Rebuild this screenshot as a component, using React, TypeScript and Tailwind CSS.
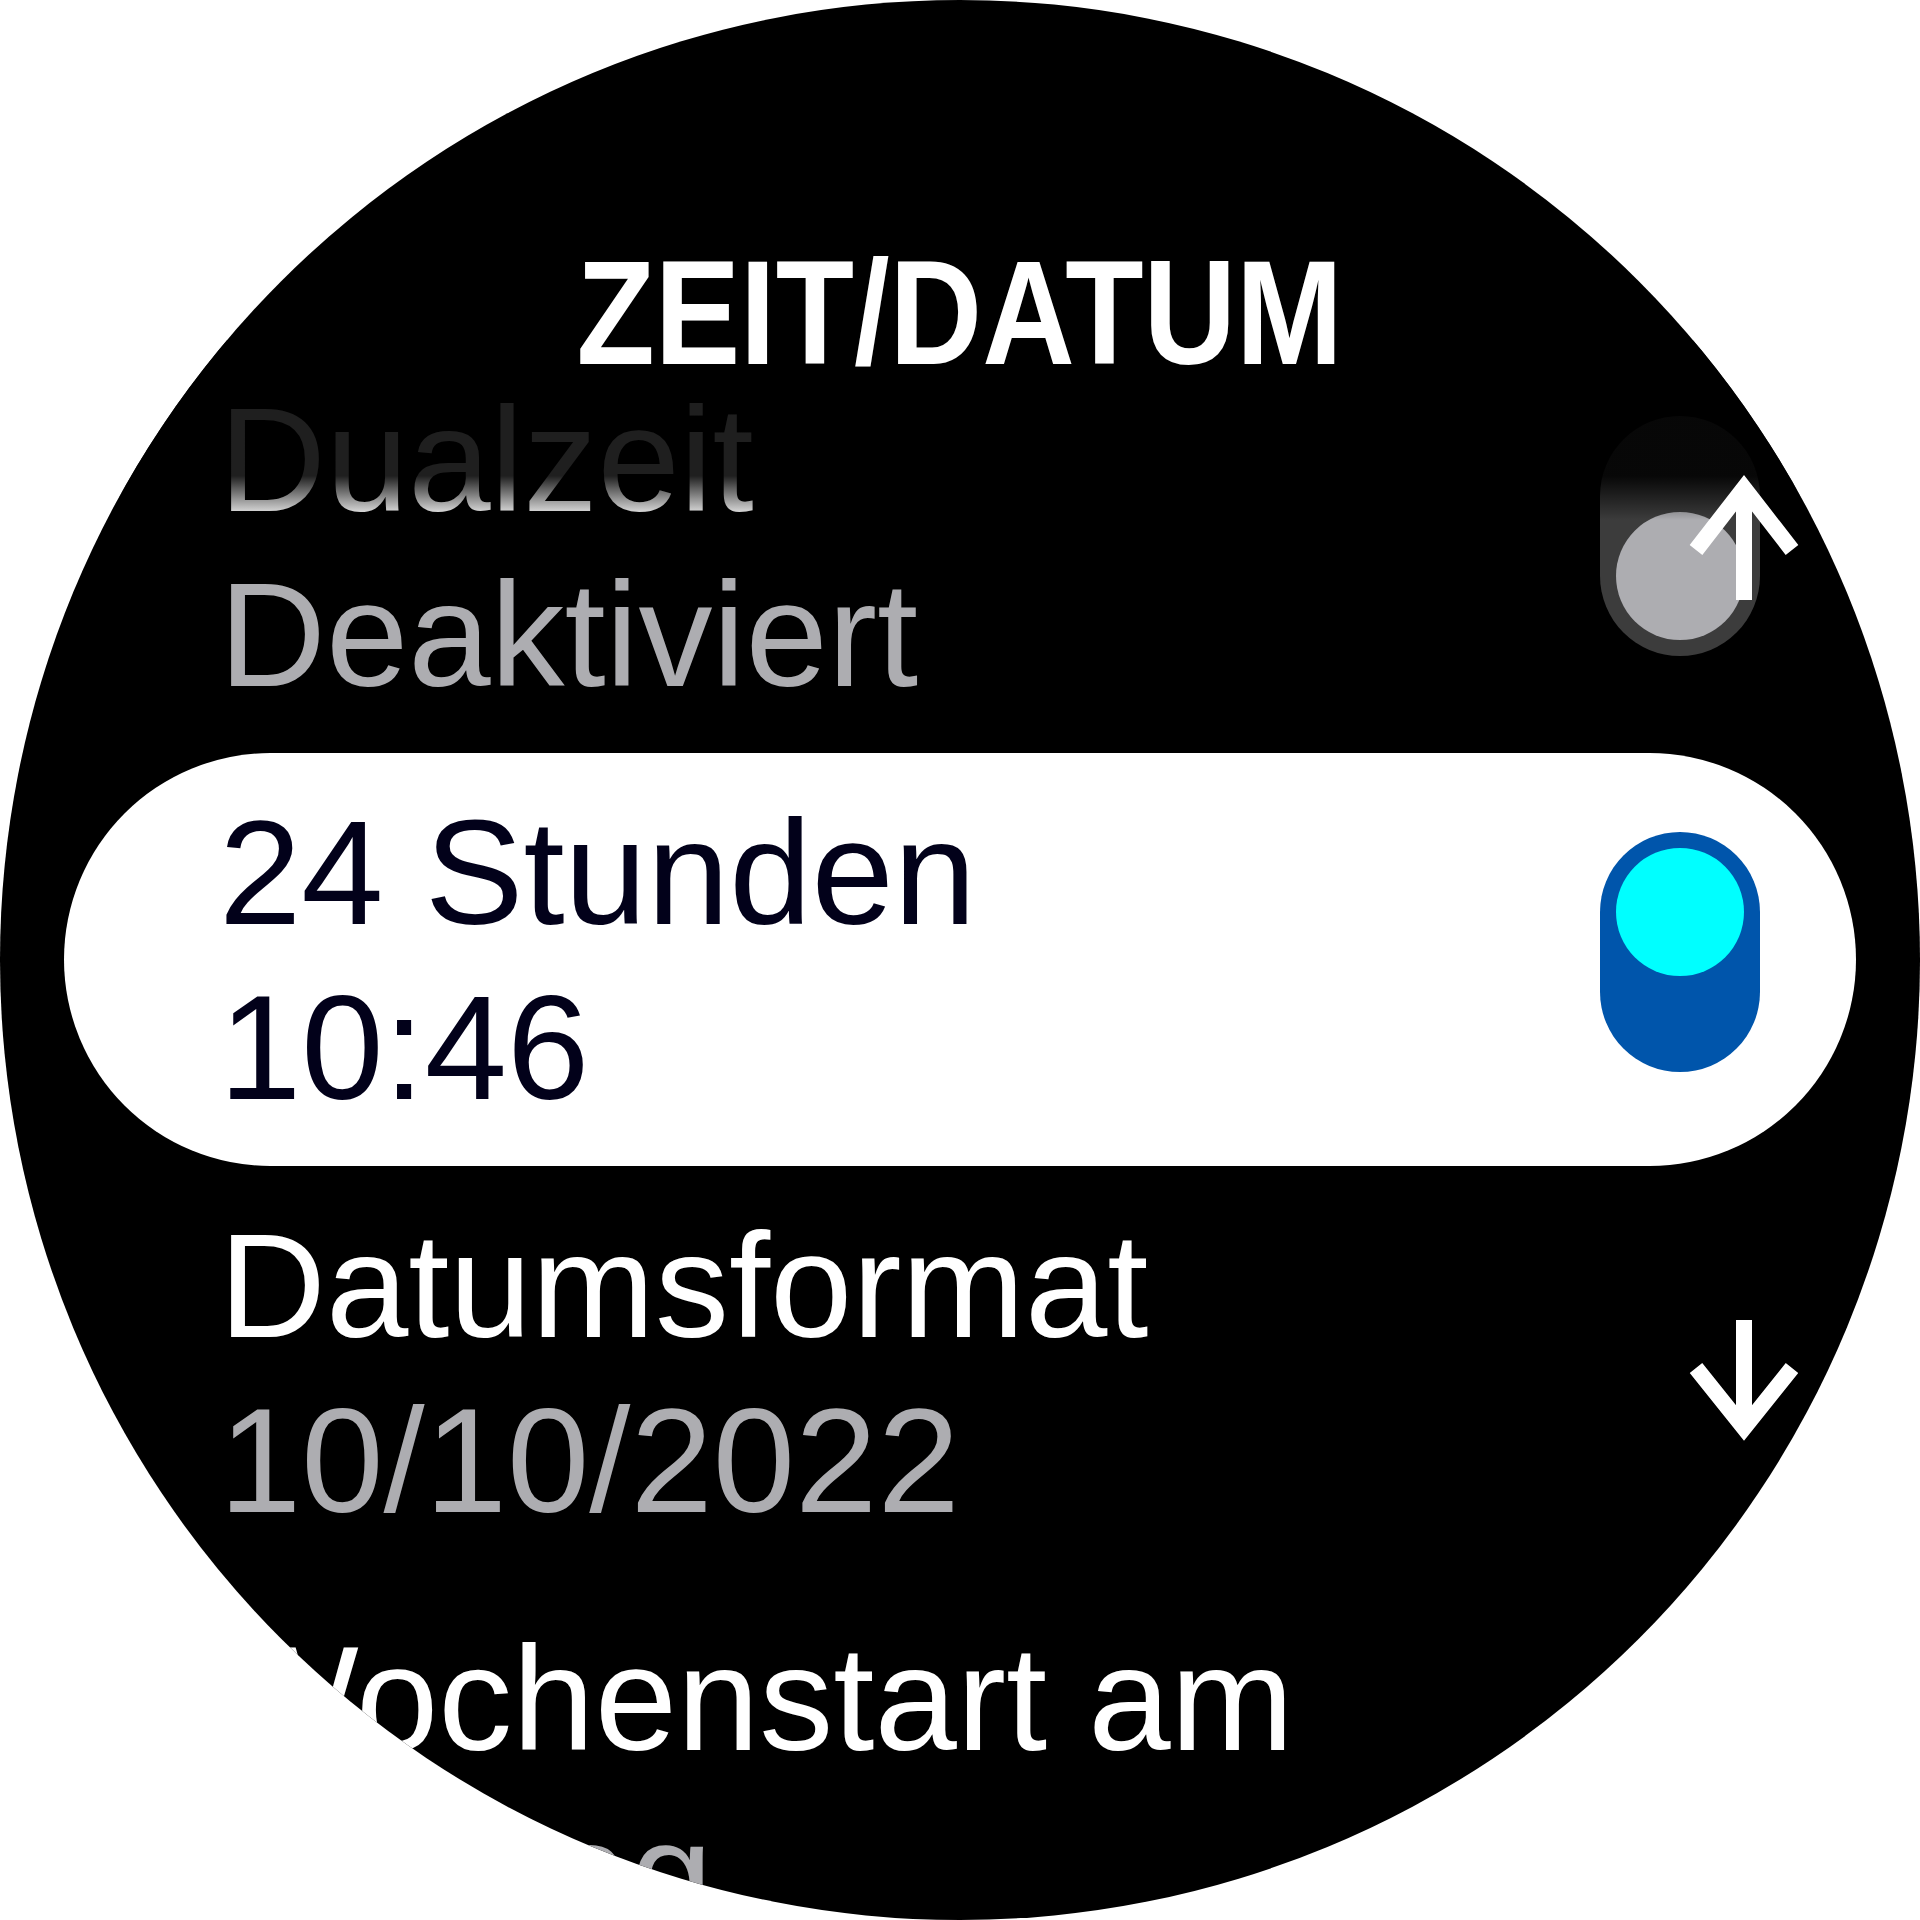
import React from "react";

type Row = {
    title: string;
    value: string;
    titleColor: string;
    valueColor: string;
    toggle?: "on" | "off";
    selected?: boolean;
};

const rows: Row[] = [
    { title: "Dualzeit", value: "Deaktiviert", titleColor: "text-white", valueColor: "text-[#adadb1]", toggle: "off" },
    { title: "24 Stunden", value: "10:46", titleColor: "text-[#02011a]", valueColor: "text-[#02011a]", toggle: "on", selected: true },
    { title: "Datumsformat", value: "10/10/2022", titleColor: "text-white", valueColor: "text-[#adadb1]" },
    { title: "Wochenstart am", value: "Montag", titleColor: "text-white", valueColor: "text-[#adadb1]" },
];

function Toggle({ on }: { on: boolean }) {
    if (on) {
        return (
            <div className="w-[160px] h-[240px] shrink-0 rounded-full bg-[#0055ab] p-[16px] mb-[16px]">
                <div className="w-[128px] h-[128px] rounded-full bg-[#00ffff]" />
            </div>
        );
    }
    return (
        <div className="w-[160px] h-[240px] shrink-0 rounded-full bg-[#3c3c3c] p-[16px] mb-[22px] flex flex-col justify-end">
            <div className="w-[128px] h-[128px] rounded-full bg-[#adadb1]" />
        </div>
    );
}

function ListRow({ row }: { row: Row }) {
    const text = (
        <div className="flex-1 min-w-0 text-[148px] leading-[175px] whitespace-nowrap">
            <div className={row.titleColor}>{row.title}</div>
            <div className={row.valueColor}>{row.value}</div>
        </div>
    );

    if (row.selected) {
        return (
            <div className="mx-[64px] h-[413px] rounded-full bg-white flex items-center pl-[155px] pr-[96px]">
                {text}
                {row.toggle && <Toggle on={row.toggle === "on"} />}
            </div>
        );
    }
    return (
        <div className="h-[413px] flex items-center pl-[219px] pr-[160px]">
            {text}
            {row.toggle && <Toggle on={row.toggle === "on"} />}
        </div>
    );
}

export default function App() {
    return (
        <div className="w-[1920px] h-[1920px] bg-white">
            <div className="relative w-full h-full rounded-full bg-black overflow-hidden font-['Liberation_Sans',Arial,sans-serif]">
                <header className="relative z-10 h-[340px] pt-[238px] text-center">
                    <h1 className="inline-block text-[149px] leading-[149px] font-bold text-white scale-x-[0.86]">
                        ZEIT/DATUM
                    </h1>
                </header>

                <div className="flex flex-col">
                    {rows.map(row => (
                        <ListRow key={row.title} row={row} />
                    ))}
                </div>

                <div className="pointer-events-none absolute left-0 right-0 top-[340px] h-[200px] bg-[linear-gradient(to_bottom,rgba(0,0,0,0.88)_0%,rgba(0,0,0,0.88)_68%,rgba(0,0,0,0)_90%)]" />

                {/* scroll indicators */}
                <svg className="absolute left-[1684px] top-[474px]" width="120" height="135" viewBox="0 0 120 135" fill="none" stroke="white" strokeWidth="16">
                    <path d="M60 14 V126" />
                    <polyline points="12,76 60,14 108,76" strokeLinejoin="miter" />
                </svg>
                <svg className="absolute left-[1684px] top-[1310px]" width="120" height="140" viewBox="0 0 120 140" fill="none" stroke="white" strokeWidth="16">
                    <path d="M60 10 V116" />
                    <polyline points="12,58 60,118 108,58" strokeLinejoin="miter" />
                </svg>
            </div>
        </div>
    );
}
